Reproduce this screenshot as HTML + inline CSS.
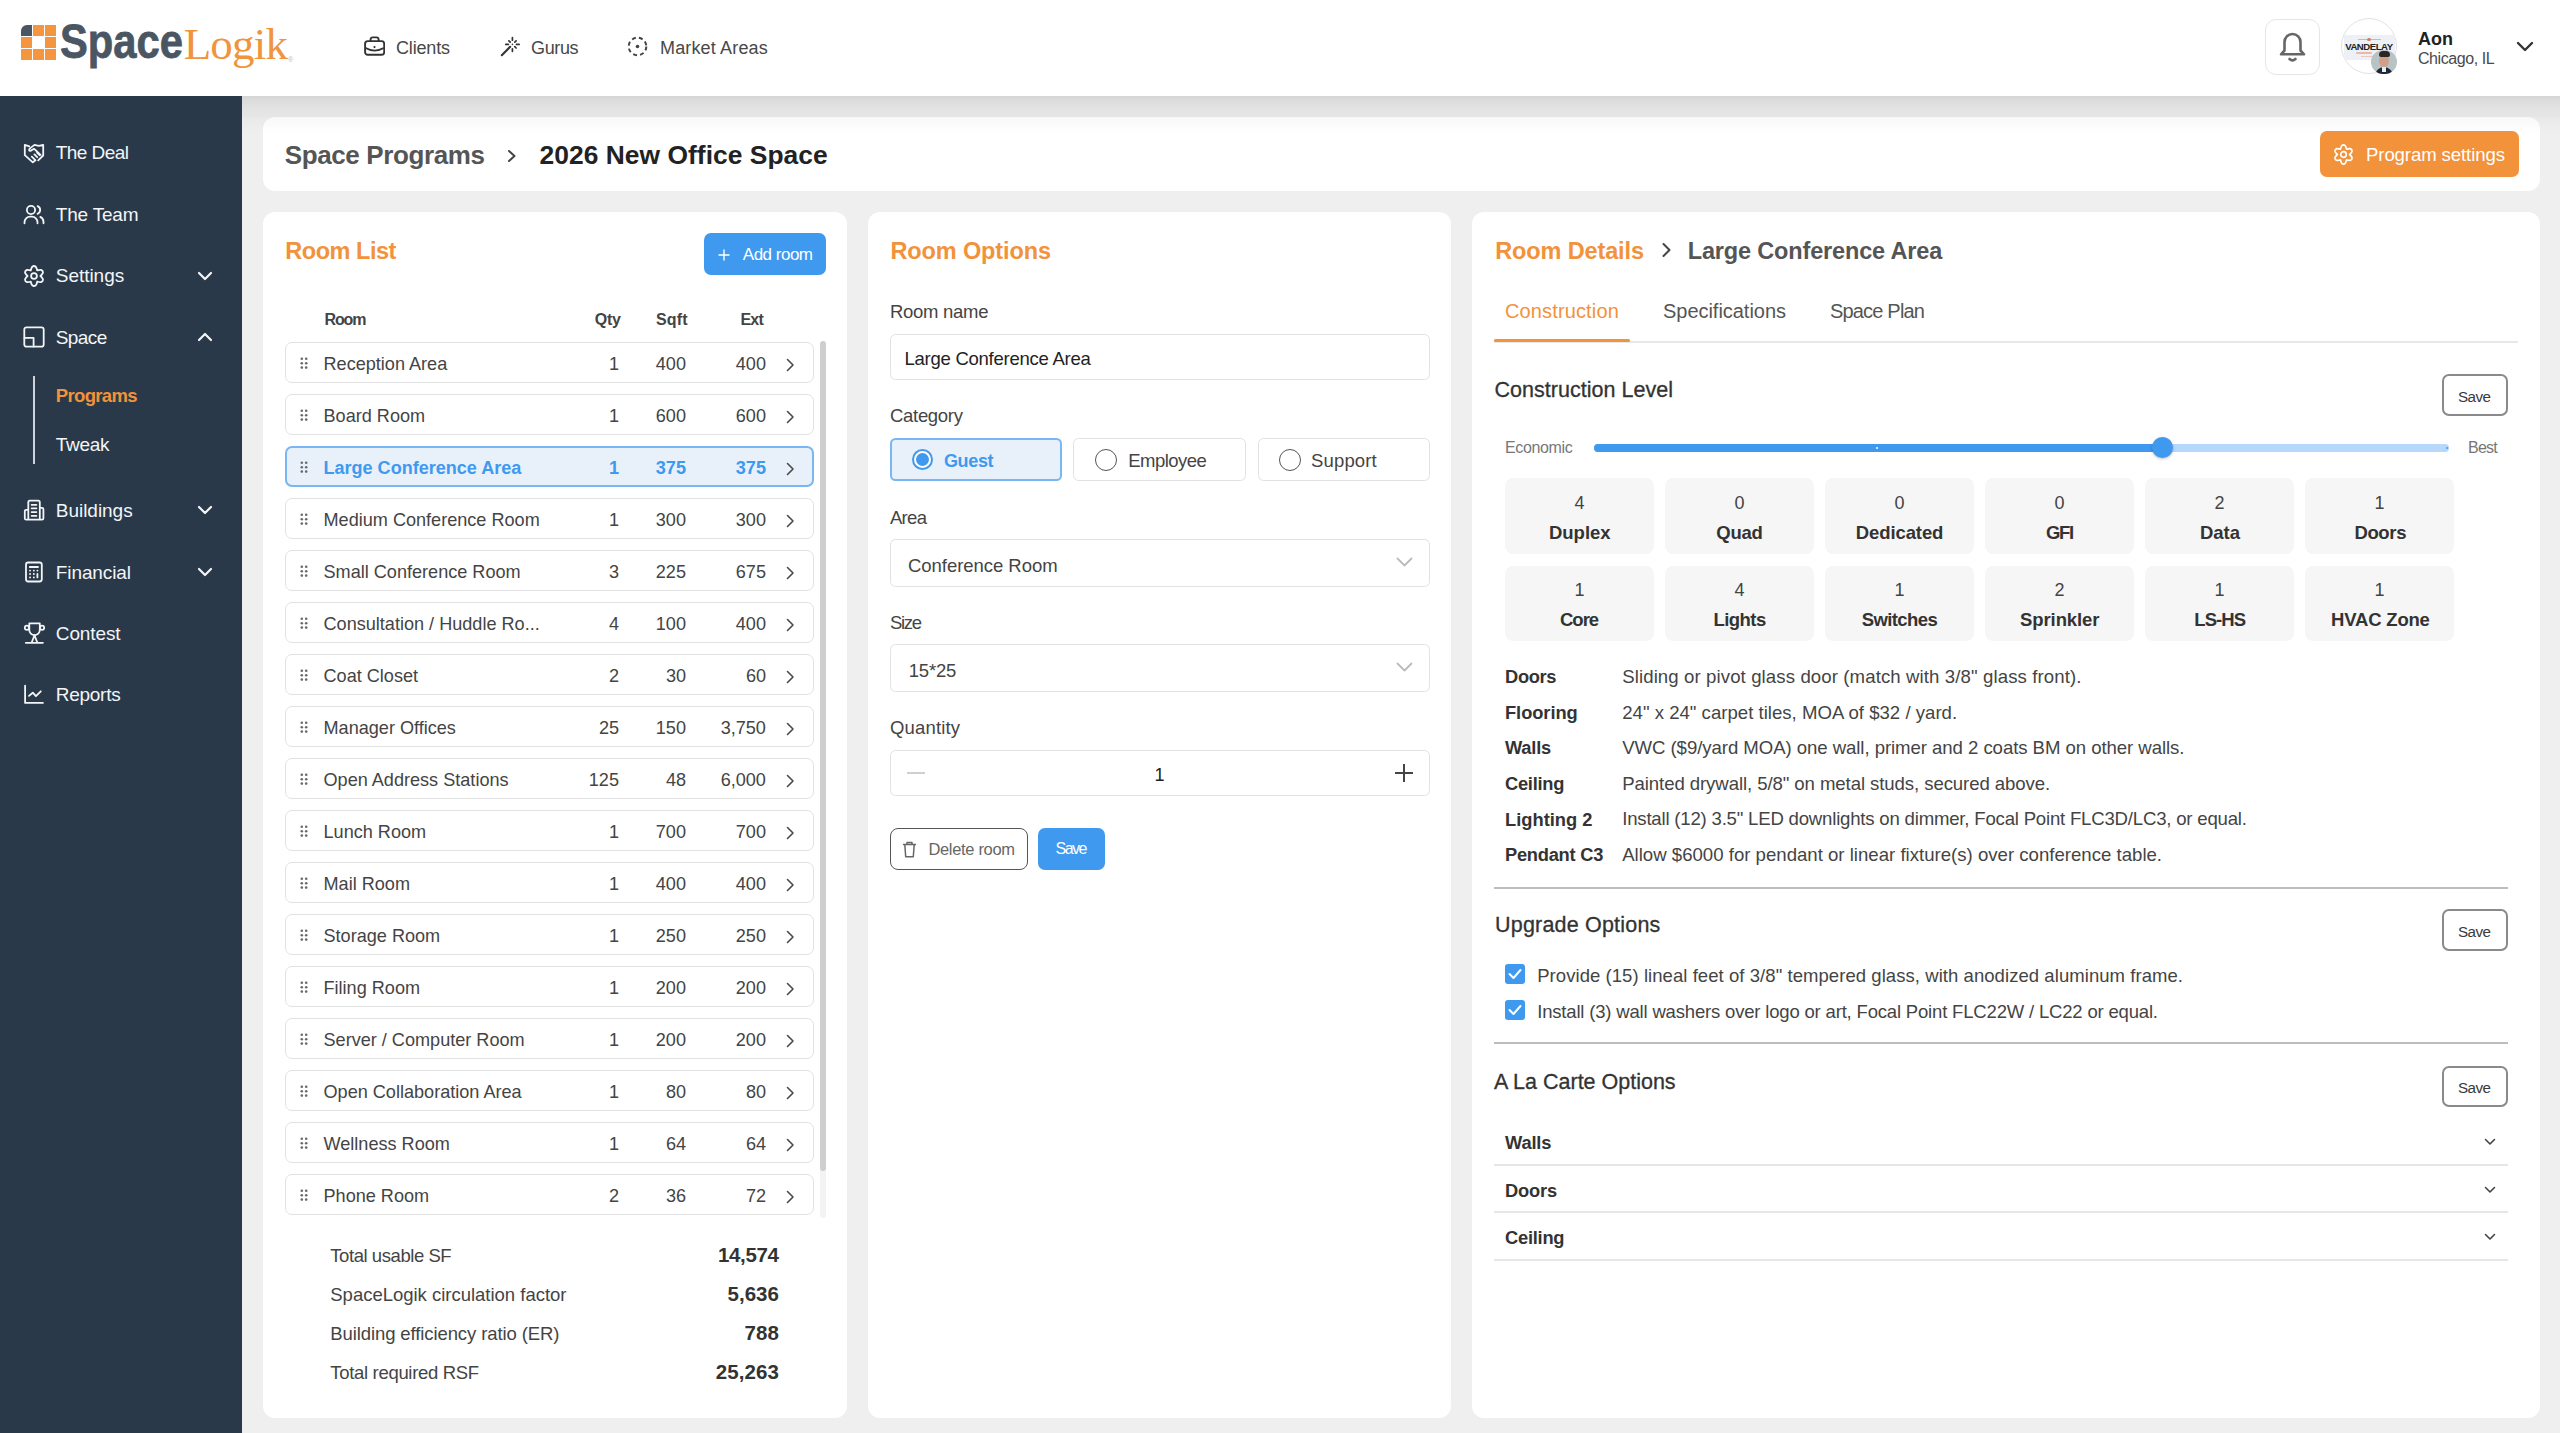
<!DOCTYPE html><html><head><meta charset="utf-8"><style>
html,body{margin:0;padding:0;}
body{width:2560px;height:1433px;overflow:hidden;position:relative;background:#efefef;font-family:"Liberation Sans", sans-serif;}
.t{position:absolute;white-space:nowrap;}
.r{position:absolute;box-sizing:border-box;}
</style></head><body>
<div class="r" style="left:0px;top:0px;width:2560px;height:96px;background:#fff;z-index:2"></div>
<div style="position:absolute;left:0;top:0;width:2560px;height:96px;z-index:3">
<div class="r" style="left:21.0px;top:25.0px;width:11.0px;height:11.0px;background:#4b5663;border-top-left-radius:6px;"></div>
<div class="r" style="left:33.2px;top:25.0px;width:11.0px;height:11.0px;background:#f3963f;"></div>
<div class="r" style="left:45.4px;top:25.0px;width:11.0px;height:11.0px;background:#f3963f;"></div>
<div class="r" style="left:21.0px;top:37.2px;width:11.0px;height:11.0px;background:#f3963f;"></div>
<div class="r" style="left:45.4px;top:37.2px;width:11.0px;height:11.0px;background:#f3963f;"></div>
<div class="r" style="left:21.0px;top:49.4px;width:11.0px;height:11.0px;background:#f3963f;"></div>
<div class="r" style="left:33.2px;top:49.4px;width:11.0px;height:11.0px;background:#f3963f;"></div>
<div class="r" style="left:45.4px;top:49.4px;width:11.0px;height:11.0px;background:#f3963f;"></div>
<div class="t" style="top:16.94px;font-size:48.5px;line-height:48.5px;font-weight:700;color:#4b5663;left:59.70px;transform:scaleX(0.86);transform-origin:0 0;-webkit-text-stroke:0.8px #4b5663;">Space</div>
<div class="t" style="top:21.60px;font-size:45px;line-height:45px;font-weight:400;color:#f0943e;font-family:'Liberation Serif', serif;letter-spacing:-0.812px;left:183.70px;">Logik</div>
<div class="t" style="top:56.07px;font-size:7px;line-height:7px;font-weight:400;color:#bbb;left:288.00px;">®</div>
<svg class="r" style="left:364px;top:36px;" width="21" height="20" viewBox="0 0 21 20"><rect x="1.1" y="5.1" width="19.1" height="13.7" rx="2.6" fill="none" stroke="#333" stroke-width="1.9"/><path d="M6.6 5.1V3.3a1.9 1.9 0 0 1 1.9-1.9h4.2a1.9 1.9 0 0 1 1.9 1.9V5.1" fill="none" stroke="#333" stroke-width="1.9"/><path d="M1.6 12Q10.6 17.2 19.7 12" fill="none" stroke="#333" stroke-width="1.9"/><circle cx="10.5" cy="11.1" r="1.1" fill="#333"/></svg>
<div class="t" style="top:38.76px;font-size:18px;line-height:18px;font-weight:400;color:#484848;letter-spacing:-0.165px;left:396.00px;">Clients</div>
<svg class="r" style="left:500px;top:36px;" width="21" height="21" viewBox="0 0 21 21"><path d="M1.8 19.2L10.2 10.8" stroke="#333" stroke-width="2.1" stroke-linecap="round"/><path d="M12.4 1.7v2.5M12.4 12.8v2.5M5.8 8.4h2.6M16.5 8.4h2.6M8.9 4.8l1.3 1.3M16.1 4.8l-1.3 1.3M16.1 12l-1.3-1.3" stroke="#333" stroke-width="1.7" stroke-linecap="round"/><circle cx="12.4" cy="8.4" r="0.8" fill="#333"/></svg>
<div class="t" style="top:38.76px;font-size:18px;line-height:18px;font-weight:400;color:#484848;letter-spacing:-0.362px;left:531.00px;">Gurus</div>
<svg class="r" style="left:627px;top:36px;" width="21" height="21" viewBox="0 0 21 21"><circle cx="10.5" cy="10.5" r="8.8" fill="none" stroke="#444" stroke-width="2" stroke-dasharray="4 3.1"/><circle cx="10.5" cy="10.5" r="1.8" fill="#444"/></svg>
<div class="t" style="top:38.76px;font-size:18px;line-height:18px;font-weight:400;color:#484848;letter-spacing:0.153px;left:660.00px;">Market Areas</div>
<div class="r" style="left:2265px;top:19px;width:55px;height:56px;border:1.5px solid #e6e6e6;border-radius:11px;background:#fff"></div>
<svg class="r" style="left:2278px;top:30px;" width="29" height="34" viewBox="0 0 29 34"><path d="M6.5 20.5V12a8 8 0 0 1 16 0v8.5l3.5 3.8H3z" fill="none" stroke="#666" stroke-width="2.6" stroke-linejoin="round"/><path d="M11.5 29q3 2.6 6 0" fill="none" stroke="#666" stroke-width="2.6" stroke-linecap="round"/></svg>
<div class="r" style="left:2341px;top:18px;width:56px;height:56px;border:1.5px solid #e2e2e2;border-radius:50%;background:#fff"></div>
<div class="r" style="left:2344px;top:34.5px;width:51px;height:25.0px;background:#edf0f5"></div>
<div class="r" style="left:2357.5px;top:38.8px;width:23.5px;height:1.0px;background:#e6aea2"></div>
<div class="r" style="left:2367px;top:37.5px;width:4px;height:3.5px;background:#d07a68;border-radius:50%"></div>
<div class="r" style="left:2356px;top:52px;width:16px;height:1.5px;background:#e8b8ac;border-radius:1px"></div>
<div class="r" style="left:2361px;top:56px;width:16px;height:1px;background:#eec5bb"></div>
<div class="t" style="top:41.87px;font-size:9.6px;line-height:9.6px;font-weight:900;color:#222;letter-spacing:-0.474px;left:2345.20px;">VANDELAY</div>
<div class="r" style="left:2371px;top:49.5px;width:25.5px;height:24.5px;border-radius:50%;overflow:hidden;background:#b7c3c4;"><div class="r" style="left:8px;top:5px;width:10px;height:12.5px;border-radius:48%;background:#d0a088"></div><div class="r" style="left:7.5px;top:1.5px;width:11px;height:6px;border-radius:6px 6px 3px 3px;background:#2e2622"></div><div class="r" style="left:3.5px;top:17.5px;width:18.5px;height:10px;border-radius:9px 9px 0 0;background:#1d2536"></div><div class="r" style="left:11px;top:17px;width:4px;height:5px;background:#e8eef0"></div></div>
<div class="t" style="top:29.76px;font-size:18px;line-height:18px;font-weight:700;color:#222;letter-spacing:-0.005px;left:2418.00px;">Aon</div>
<div class="t" style="top:51.45px;font-size:16px;line-height:16px;font-weight:400;color:#4a4a4a;letter-spacing:-0.436px;left:2418.00px;">Chicago, IL</div>
<svg class="r" style="left:2516px;top:41px;" width="18" height="12" viewBox="0 0 18 12"><path d="M2 2l7 7 7-7" fill="none" stroke="#333" stroke-width="2.4" stroke-linecap="round" stroke-linejoin="round"/></svg>
</div>
<div class="r" style="left:0px;top:96px;width:242px;height:1337px;background:#293949"></div>
<div class="t" style="top:143.41px;font-size:19px;line-height:19px;font-weight:400;color:#f4f5f7;letter-spacing:-0.563px;left:55.80px;">The Deal</div>
<div class="t" style="top:204.91px;font-size:19px;line-height:19px;font-weight:400;color:#f4f5f7;letter-spacing:-0.210px;left:55.80px;">The Team</div>
<div class="t" style="top:266.41px;font-size:19px;line-height:19px;font-weight:400;color:#f4f5f7;letter-spacing:-0.041px;left:55.80px;">Settings</div>
<div class="t" style="top:327.71px;font-size:19px;line-height:19px;font-weight:400;color:#f4f5f7;letter-spacing:-0.616px;left:55.80px;">Space</div>
<div class="t" style="top:501.11px;font-size:19px;line-height:19px;font-weight:400;color:#f4f5f7;letter-spacing:-0.030px;left:55.80px;">Buildings</div>
<div class="t" style="top:562.71px;font-size:19px;line-height:19px;font-weight:400;color:#f4f5f7;letter-spacing:-0.100px;left:55.80px;">Financial</div>
<div class="t" style="top:623.91px;font-size:19px;line-height:19px;font-weight:400;color:#f4f5f7;letter-spacing:-0.109px;left:55.80px;">Contest</div>
<div class="t" style="top:685.21px;font-size:19px;line-height:19px;font-weight:400;color:#f4f5f7;letter-spacing:-0.283px;left:55.80px;">Reports</div>
<svg class="r" style="left:23px;top:141.5px;" width="22" height="22" viewBox="0 0 22 22"><path d="M1.8 2.8V13.2L9.8 20.3L12.5 18.3M20.2 2.8V13.5L15.2 18.3M1.8 2.8L6.3 4.3M20.2 2.8L15.8 3.9L11.5 2.9L6.6 6.6Q5.2 8.9 7.4 8.9L11.2 6.8L17.6 12.8M8.8 14.6L11.6 17.4M11.4 12.4L14.2 15.2M14 10.6L16.6 13.2" fill="none" stroke="#f4f5f7" stroke-width="1.8" stroke-linecap="round" stroke-linejoin="round"/></svg>
<svg class="r" style="left:23px;top:203px;" width="22" height="22" viewBox="0 0 22 22"><circle cx="8" cy="7" r="4.1" fill="none" stroke="#f4f5f7" stroke-width="1.8" stroke-linecap="round" stroke-linejoin="round"/><path d="M1.5 20.3v-1a5.6 5.6 0 0 1 5.6-5.6h1.8a5.6 5.6 0 0 1 5.6 5.6v1" fill="none" stroke="#f4f5f7" stroke-width="1.8" stroke-linecap="round" stroke-linejoin="round"/><path d="M14.6 3.2a4.1 4.1 0 0 1 0 7.6M17.3 13.9a5.6 5.6 0 0 1 3.2 5.2v1.2" fill="none" stroke="#f4f5f7" stroke-width="1.8" stroke-linecap="round" stroke-linejoin="round"/></svg>
<svg class="r" style="left:23px;top:264.5px;" width="22" height="22" viewBox="0 0 22 22"><path d="M7.80 5.46 Q8.00 3.58 9.21 1.77 Q11.00 0.30 12.79 1.77 Q14.00 3.58 14.20 5.46 Q15.93 4.70 18.09 4.83 Q20.27 5.65 19.89 7.94 Q18.92 9.89 17.40 11.00 Q18.92 12.11 19.89 14.06 Q20.27 16.35 18.09 17.17 Q15.93 17.30 14.20 16.54 Q14.00 18.42 12.79 20.23 Q11.00 21.70 9.21 20.23 Q8.00 18.42 7.80 16.54 Q6.07 17.30 3.91 17.17 Q1.73 16.35 2.11 14.06 Q3.08 12.11 4.60 11.00 Q3.08 9.89 2.11 7.94 Q1.73 5.65 3.91 4.83 Q6.07 4.70 7.80 5.46Z" fill="none" stroke="#f4f5f7" stroke-width="1.8" stroke-linecap="round" stroke-linejoin="round"/><circle cx="11" cy="11" r="2.9" fill="none" stroke="#f4f5f7" stroke-width="1.8" stroke-linecap="round" stroke-linejoin="round"/></svg>
<svg class="r" style="left:23px;top:325.8px;" width="22" height="22" viewBox="0 0 22 22"><rect x="1.3" y="1.3" width="19.4" height="19.4" rx="2.2" fill="none" stroke="#f4f5f7" stroke-width="1.8" stroke-linecap="round" stroke-linejoin="round"/><path d="M1.5 11.9h9.1v8.6" fill="none" stroke="#f4f5f7" stroke-width="1.8" stroke-linecap="round" stroke-linejoin="round"/></svg>
<svg class="r" style="left:23px;top:499.2px;" width="22" height="22" viewBox="0 0 22 22"><path d="M5.3 20.6V3.3a1.6 1.6 0 0 1 1.6-1.6h8.3a1.6 1.6 0 0 1 1.6 1.6v17.3M5.3 10.8H3.2a1.4 1.4 0 0 0-1.4 1.4v7a1.4 1.4 0 0 0 1.4 1.4h15.8a1.4 1.4 0 0 0 1.4-1.4v-8.9a1.4 1.4 0 0 0-1.4-1.4h-2.2M8.6 5.8h4.8M8.6 9.3h4.8M8.6 13.1h4.8M8.6 16.8h4.8" fill="none" stroke="#f4f5f7" stroke-width="1.8" stroke-linecap="round" stroke-linejoin="round"/></svg>
<svg class="r" style="left:23px;top:560.8px;" width="22" height="22" viewBox="0 0 22 22"><rect x="3" y="1.5" width="15.8" height="19" rx="2.2" fill="none" stroke="#f4f5f7" stroke-width="1.8" stroke-linecap="round" stroke-linejoin="round"/><path d="M6.8 6h8.2M7 9.6h.1M10.8 9.6h.1M14.4 9.6h.1M7 13h.1M10.8 13h.1M7 16.4h.1M10.8 16.4h.1M14.4 13v3.4" fill="none" stroke="#f4f5f7" stroke-width="1.8" stroke-linecap="round" stroke-linejoin="round" stroke-width="2"/></svg>
<svg class="r" style="left:23px;top:622px;" width="22" height="22" viewBox="0 0 22 22"><path d="M6.3 1.4h10.5v6.5a5.25 5.25 0 0 1-10.5 0z" fill="none" stroke="#f4f5f7" stroke-width="1.8" stroke-linecap="round" stroke-linejoin="round"/><circle cx="3.9" cy="5.7" r="2.1" fill="none" stroke="#f4f5f7" stroke-width="1.8" stroke-linecap="round" stroke-linejoin="round"/><circle cx="19.1" cy="5.7" r="2.1" fill="none" stroke="#f4f5f7" stroke-width="1.8" stroke-linecap="round" stroke-linejoin="round"/><path d="M11.5 13.2L8.6 20.8h5.8z M2.8 20.8h17.1" fill="none" stroke="#f4f5f7" stroke-width="1.8" stroke-linecap="round" stroke-linejoin="round"/></svg>
<svg class="r" style="left:23px;top:683.3px;" width="22" height="22" viewBox="0 0 22 22"><path d="M2.1 2.7V19.9H19.9" fill="none" stroke="#f4f5f7" stroke-width="1.8" stroke-linecap="round" stroke-linejoin="round"/><path d="M6 12.9L9.8 9.7L12.9 13.2L17.8 8.3" fill="none" stroke="#f4f5f7" stroke-width="1.8" stroke-linecap="round" stroke-linejoin="round"/></svg>
<svg class="r" style="left:197px;top:270.5px;" width="16" height="10" viewBox="0 0 16 10"><path d="M2 2l6 6 6-6" fill="none" stroke="#f4f5f7" stroke-width="2.2" stroke-linecap="round" stroke-linejoin="round"/></svg>
<svg class="r" style="left:197px;top:331.8px;" width="16" height="10" viewBox="0 0 16 10"><path d="M2 8l6-6 6 6" fill="none" stroke="#f4f5f7" stroke-width="2.2" stroke-linecap="round" stroke-linejoin="round"/></svg>
<svg class="r" style="left:197px;top:505.2px;" width="16" height="10" viewBox="0 0 16 10"><path d="M2 2l6 6 6-6" fill="none" stroke="#f4f5f7" stroke-width="2.2" stroke-linecap="round" stroke-linejoin="round"/></svg>
<svg class="r" style="left:197px;top:566.8px;" width="16" height="10" viewBox="0 0 16 10"><path d="M2 2l6 6 6-6" fill="none" stroke="#f4f5f7" stroke-width="2.2" stroke-linecap="round" stroke-linejoin="round"/></svg>
<div class="r" style="left:32.5px;top:376px;width:2.0px;height:88px;background:#d0d4da"></div>
<div class="t" style="top:386.84px;font-size:18.5px;line-height:18.5px;font-weight:700;color:#f2923b;letter-spacing:-0.656px;left:55.80px;">Programs</div>
<div class="t" style="top:434.91px;font-size:19px;line-height:19px;font-weight:400;color:#f4f5f7;letter-spacing:-0.326px;left:55.80px;">Tweak</div>
<div class="r" style="left:263px;top:117px;width:2277px;height:74px;background:#fff;border-radius:12px"></div>
<div class="t" style="top:141.99px;font-size:26px;line-height:26px;font-weight:700;color:#555;letter-spacing:-0.382px;left:284.70px;">Space Programs</div>
<svg class="r" style="left:507px;top:149px;" width="10" height="14" viewBox="0 0 10 14"><path d="M2 2l5.5 5-5.5 5" fill="none" stroke="#444" stroke-width="2" stroke-linecap="round" stroke-linejoin="round"/></svg>
<div class="t" style="top:141.85px;font-size:26.4px;line-height:26.4px;font-weight:700;color:#222;letter-spacing:0.029px;left:539.60px;">2026 New Office Space</div>
<div class="r" style="left:2320px;top:131px;width:199px;height:46px;background:#f2923b;border-radius:7px"></div>
<svg class="r" style="left:2333px;top:144px;" width="21" height="21" viewBox="0 0 21 21"><path d="M7.45 5.22 Q7.64 3.42 8.78 1.67 Q10.50 0.26 12.22 1.67 Q13.36 3.42 13.55 5.22 Q15.20 4.49 17.29 4.60 Q19.37 5.38 19.01 7.57 Q18.06 9.44 16.60 10.50 Q18.06 11.56 19.01 13.43 Q19.37 15.62 17.29 16.40 Q15.20 16.51 13.55 15.78 Q13.36 17.58 12.22 19.33 Q10.50 20.74 8.78 19.33 Q7.64 17.58 7.45 15.78 Q5.80 16.51 3.71 16.40 Q1.63 15.62 1.99 13.43 Q2.94 11.56 4.40 10.50 Q2.94 9.44 1.99 7.57 Q1.63 5.38 3.71 4.60 Q5.80 4.49 7.45 5.22Z" fill="none" stroke="#fff" stroke-width="1.7" stroke-linejoin="round"/><circle cx="10.5" cy="10.5" r="2.8" fill="none" stroke="#fff" stroke-width="1.7"/></svg>
<div class="t" style="top:145.75px;font-size:18.6px;line-height:18.6px;font-weight:400;color:#fff;letter-spacing:-0.108px;left:2366.00px;">Program settings</div>
<div class="r" style="left:263px;top:212px;width:584px;height:1206px;background:#fff;border-radius:12px"></div>
<div class="r" style="left:868px;top:212px;width:583px;height:1206px;background:#fff;border-radius:12px"></div>
<div class="r" style="left:1472px;top:212px;width:1068px;height:1206px;background:#fff;border-radius:12px"></div>
<div class="t" style="top:240.10px;font-size:23.5px;line-height:23.5px;font-weight:700;color:#f2923b;letter-spacing:-0.477px;left:285.30px;">Room List</div>
<div class="r" style="left:704px;top:233px;width:122px;height:42px;background:#3e99ef;border-radius:7px"></div>
<svg class="r" style="left:717.5px;top:248.5px;" width="12" height="12" viewBox="0 0 12 12"><path d="M6 .5v11M.5 6h11" stroke="#fff" stroke-width="1.4"/></svg>
<div class="t" style="top:246.11px;font-size:17px;line-height:17px;font-weight:400;color:#fff;letter-spacing:-0.499px;left:742.80px;">Add room</div>
<div class="t" style="top:312.25px;font-size:16px;line-height:16px;font-weight:700;color:#444;letter-spacing:-1.053px;left:324.40px;">Room</div>
<div class="t" style="top:312.25px;font-size:16px;line-height:16px;font-weight:700;color:#444;letter-spacing:-0.170px;left:594.70px;">Qty</div>
<div class="t" style="top:312.25px;font-size:16px;line-height:16px;font-weight:700;color:#444;letter-spacing:0.193px;left:656.00px;">Sqft</div>
<div class="t" style="top:312.25px;font-size:16px;line-height:16px;font-weight:700;color:#444;letter-spacing:-0.690px;left:740.40px;">Ext</div>
<div class="r" style="left:285px;top:342px;width:529px;height:41px;background:#fff;border:1.5px solid #e2e2e2;border-radius:7px"></div>
<svg class="r" style="left:300px;top:356.5px;" width="8" height="13" viewBox="0 0 8 13"><circle cx="1.8" cy="1.8" r="1.3" fill="#6a6a6a"/><circle cx="1.8" cy="6.2" r="1.3" fill="#6a6a6a"/><circle cx="1.8" cy="10.6" r="1.3" fill="#6a6a6a"/><circle cx="6.2" cy="1.8" r="1.3" fill="#6a6a6a"/><circle cx="6.2" cy="6.2" r="1.3" fill="#6a6a6a"/><circle cx="6.2" cy="10.6" r="1.3" fill="#6a6a6a"/></svg>
<div class="t" style="top:354.67px;font-size:18.1px;line-height:18.1px;font-weight:400;color:#444;left:323.50px;">Reception Area</div>
<div class="t" style="top:354.67px;font-size:18.1px;line-height:18.1px;font-weight:400;color:#444;left:608.95px;">1</div>
<div class="t" style="top:354.67px;font-size:18.1px;line-height:18.1px;font-weight:400;color:#444;left:655.77px;">400</div>
<div class="t" style="top:354.67px;font-size:18.1px;line-height:18.1px;font-weight:400;color:#444;left:735.77px;">400</div>
<svg class="r" style="left:785.5px;top:358px;" width="9" height="14" viewBox="0 0 9 14"><path d="M1.5 1.5l5.5 5.5-5.5 5.5" fill="none" stroke="#4a4a4a" stroke-width="1.6" stroke-linecap="round" stroke-linejoin="round"/></svg>
<div class="r" style="left:285px;top:394px;width:529px;height:41px;background:#fff;border:1.5px solid #e2e2e2;border-radius:7px"></div>
<svg class="r" style="left:300px;top:408.5px;" width="8" height="13" viewBox="0 0 8 13"><circle cx="1.8" cy="1.8" r="1.3" fill="#6a6a6a"/><circle cx="1.8" cy="6.2" r="1.3" fill="#6a6a6a"/><circle cx="1.8" cy="10.6" r="1.3" fill="#6a6a6a"/><circle cx="6.2" cy="1.8" r="1.3" fill="#6a6a6a"/><circle cx="6.2" cy="6.2" r="1.3" fill="#6a6a6a"/><circle cx="6.2" cy="10.6" r="1.3" fill="#6a6a6a"/></svg>
<div class="t" style="top:406.67px;font-size:18.1px;line-height:18.1px;font-weight:400;color:#444;left:323.50px;">Board Room</div>
<div class="t" style="top:406.67px;font-size:18.1px;line-height:18.1px;font-weight:400;color:#444;left:608.95px;">1</div>
<div class="t" style="top:406.67px;font-size:18.1px;line-height:18.1px;font-weight:400;color:#444;left:655.77px;">600</div>
<div class="t" style="top:406.67px;font-size:18.1px;line-height:18.1px;font-weight:400;color:#444;left:735.77px;">600</div>
<svg class="r" style="left:785.5px;top:410px;" width="9" height="14" viewBox="0 0 9 14"><path d="M1.5 1.5l5.5 5.5-5.5 5.5" fill="none" stroke="#4a4a4a" stroke-width="1.6" stroke-linecap="round" stroke-linejoin="round"/></svg>
<div class="r" style="left:285px;top:446px;width:529px;height:41px;background:#e8f0fa;border:2px solid #78b6f4;border-radius:7px"></div>
<svg class="r" style="left:300px;top:460.5px;" width="8" height="13" viewBox="0 0 8 13"><circle cx="1.8" cy="1.8" r="1.3" fill="#6a6a6a"/><circle cx="1.8" cy="6.2" r="1.3" fill="#6a6a6a"/><circle cx="1.8" cy="10.6" r="1.3" fill="#6a6a6a"/><circle cx="6.2" cy="1.8" r="1.3" fill="#6a6a6a"/><circle cx="6.2" cy="6.2" r="1.3" fill="#6a6a6a"/><circle cx="6.2" cy="10.6" r="1.3" fill="#6a6a6a"/></svg>
<div class="t" style="top:458.72px;font-size:18.05px;line-height:18.05px;font-weight:700;color:#3e99ef;left:323.50px;">Large Conference Area</div>
<div class="t" style="top:458.67px;font-size:18.1px;line-height:18.1px;font-weight:700;color:#3e99ef;left:608.95px;">1</div>
<div class="t" style="top:458.67px;font-size:18.1px;line-height:18.1px;font-weight:700;color:#3e99ef;left:655.77px;">375</div>
<div class="t" style="top:458.67px;font-size:18.1px;line-height:18.1px;font-weight:700;color:#3e99ef;left:735.77px;">375</div>
<svg class="r" style="left:785.5px;top:462px;" width="9" height="14" viewBox="0 0 9 14"><path d="M1.5 1.5l5.5 5.5-5.5 5.5" fill="none" stroke="#4a4a4a" stroke-width="1.6" stroke-linecap="round" stroke-linejoin="round"/></svg>
<div class="r" style="left:285px;top:498px;width:529px;height:41px;background:#fff;border:1.5px solid #e2e2e2;border-radius:7px"></div>
<svg class="r" style="left:300px;top:512.5px;" width="8" height="13" viewBox="0 0 8 13"><circle cx="1.8" cy="1.8" r="1.3" fill="#6a6a6a"/><circle cx="1.8" cy="6.2" r="1.3" fill="#6a6a6a"/><circle cx="1.8" cy="10.6" r="1.3" fill="#6a6a6a"/><circle cx="6.2" cy="1.8" r="1.3" fill="#6a6a6a"/><circle cx="6.2" cy="6.2" r="1.3" fill="#6a6a6a"/><circle cx="6.2" cy="10.6" r="1.3" fill="#6a6a6a"/></svg>
<div class="t" style="top:510.67px;font-size:18.1px;line-height:18.1px;font-weight:400;color:#444;left:323.50px;">Medium Conference Room</div>
<div class="t" style="top:510.67px;font-size:18.1px;line-height:18.1px;font-weight:400;color:#444;left:608.95px;">1</div>
<div class="t" style="top:510.67px;font-size:18.1px;line-height:18.1px;font-weight:400;color:#444;left:655.77px;">300</div>
<div class="t" style="top:510.67px;font-size:18.1px;line-height:18.1px;font-weight:400;color:#444;left:735.77px;">300</div>
<svg class="r" style="left:785.5px;top:514px;" width="9" height="14" viewBox="0 0 9 14"><path d="M1.5 1.5l5.5 5.5-5.5 5.5" fill="none" stroke="#4a4a4a" stroke-width="1.6" stroke-linecap="round" stroke-linejoin="round"/></svg>
<div class="r" style="left:285px;top:550px;width:529px;height:41px;background:#fff;border:1.5px solid #e2e2e2;border-radius:7px"></div>
<svg class="r" style="left:300px;top:564.5px;" width="8" height="13" viewBox="0 0 8 13"><circle cx="1.8" cy="1.8" r="1.3" fill="#6a6a6a"/><circle cx="1.8" cy="6.2" r="1.3" fill="#6a6a6a"/><circle cx="1.8" cy="10.6" r="1.3" fill="#6a6a6a"/><circle cx="6.2" cy="1.8" r="1.3" fill="#6a6a6a"/><circle cx="6.2" cy="6.2" r="1.3" fill="#6a6a6a"/><circle cx="6.2" cy="10.6" r="1.3" fill="#6a6a6a"/></svg>
<div class="t" style="top:562.67px;font-size:18.1px;line-height:18.1px;font-weight:400;color:#444;left:323.50px;">Small Conference Room</div>
<div class="t" style="top:562.67px;font-size:18.1px;line-height:18.1px;font-weight:400;color:#444;left:608.95px;">3</div>
<div class="t" style="top:562.67px;font-size:18.1px;line-height:18.1px;font-weight:400;color:#444;left:655.77px;">225</div>
<div class="t" style="top:562.67px;font-size:18.1px;line-height:18.1px;font-weight:400;color:#444;left:735.77px;">675</div>
<svg class="r" style="left:785.5px;top:566px;" width="9" height="14" viewBox="0 0 9 14"><path d="M1.5 1.5l5.5 5.5-5.5 5.5" fill="none" stroke="#4a4a4a" stroke-width="1.6" stroke-linecap="round" stroke-linejoin="round"/></svg>
<div class="r" style="left:285px;top:602px;width:529px;height:41px;background:#fff;border:1.5px solid #e2e2e2;border-radius:7px"></div>
<svg class="r" style="left:300px;top:616.5px;" width="8" height="13" viewBox="0 0 8 13"><circle cx="1.8" cy="1.8" r="1.3" fill="#6a6a6a"/><circle cx="1.8" cy="6.2" r="1.3" fill="#6a6a6a"/><circle cx="1.8" cy="10.6" r="1.3" fill="#6a6a6a"/><circle cx="6.2" cy="1.8" r="1.3" fill="#6a6a6a"/><circle cx="6.2" cy="6.2" r="1.3" fill="#6a6a6a"/><circle cx="6.2" cy="10.6" r="1.3" fill="#6a6a6a"/></svg>
<div class="t" style="top:614.67px;font-size:18.1px;line-height:18.1px;font-weight:400;color:#444;left:323.50px;">Consultation / Huddle Ro...</div>
<div class="t" style="top:614.67px;font-size:18.1px;line-height:18.1px;font-weight:400;color:#444;left:608.95px;">4</div>
<div class="t" style="top:614.67px;font-size:18.1px;line-height:18.1px;font-weight:400;color:#444;left:655.77px;">100</div>
<div class="t" style="top:614.67px;font-size:18.1px;line-height:18.1px;font-weight:400;color:#444;left:735.77px;">400</div>
<svg class="r" style="left:785.5px;top:618px;" width="9" height="14" viewBox="0 0 9 14"><path d="M1.5 1.5l5.5 5.5-5.5 5.5" fill="none" stroke="#4a4a4a" stroke-width="1.6" stroke-linecap="round" stroke-linejoin="round"/></svg>
<div class="r" style="left:285px;top:654px;width:529px;height:41px;background:#fff;border:1.5px solid #e2e2e2;border-radius:7px"></div>
<svg class="r" style="left:300px;top:668.5px;" width="8" height="13" viewBox="0 0 8 13"><circle cx="1.8" cy="1.8" r="1.3" fill="#6a6a6a"/><circle cx="1.8" cy="6.2" r="1.3" fill="#6a6a6a"/><circle cx="1.8" cy="10.6" r="1.3" fill="#6a6a6a"/><circle cx="6.2" cy="1.8" r="1.3" fill="#6a6a6a"/><circle cx="6.2" cy="6.2" r="1.3" fill="#6a6a6a"/><circle cx="6.2" cy="10.6" r="1.3" fill="#6a6a6a"/></svg>
<div class="t" style="top:666.67px;font-size:18.1px;line-height:18.1px;font-weight:400;color:#444;left:323.50px;">Coat Closet</div>
<div class="t" style="top:666.67px;font-size:18.1px;line-height:18.1px;font-weight:400;color:#444;left:608.95px;">2</div>
<div class="t" style="top:666.67px;font-size:18.1px;line-height:18.1px;font-weight:400;color:#444;left:665.91px;">30</div>
<div class="t" style="top:666.67px;font-size:18.1px;line-height:18.1px;font-weight:400;color:#444;left:745.91px;">60</div>
<svg class="r" style="left:785.5px;top:670px;" width="9" height="14" viewBox="0 0 9 14"><path d="M1.5 1.5l5.5 5.5-5.5 5.5" fill="none" stroke="#4a4a4a" stroke-width="1.6" stroke-linecap="round" stroke-linejoin="round"/></svg>
<div class="r" style="left:285px;top:706px;width:529px;height:41px;background:#fff;border:1.5px solid #e2e2e2;border-radius:7px"></div>
<svg class="r" style="left:300px;top:720.5px;" width="8" height="13" viewBox="0 0 8 13"><circle cx="1.8" cy="1.8" r="1.3" fill="#6a6a6a"/><circle cx="1.8" cy="6.2" r="1.3" fill="#6a6a6a"/><circle cx="1.8" cy="10.6" r="1.3" fill="#6a6a6a"/><circle cx="6.2" cy="1.8" r="1.3" fill="#6a6a6a"/><circle cx="6.2" cy="6.2" r="1.3" fill="#6a6a6a"/><circle cx="6.2" cy="10.6" r="1.3" fill="#6a6a6a"/></svg>
<div class="t" style="top:718.67px;font-size:18.1px;line-height:18.1px;font-weight:400;color:#444;left:323.50px;">Manager Offices</div>
<div class="t" style="top:718.67px;font-size:18.1px;line-height:18.1px;font-weight:400;color:#444;left:598.91px;">25</div>
<div class="t" style="top:718.67px;font-size:18.1px;line-height:18.1px;font-weight:400;color:#444;left:655.77px;">150</div>
<div class="t" style="top:718.67px;font-size:18.1px;line-height:18.1px;font-weight:400;color:#444;left:720.66px;">3,750</div>
<svg class="r" style="left:785.5px;top:722px;" width="9" height="14" viewBox="0 0 9 14"><path d="M1.5 1.5l5.5 5.5-5.5 5.5" fill="none" stroke="#4a4a4a" stroke-width="1.6" stroke-linecap="round" stroke-linejoin="round"/></svg>
<div class="r" style="left:285px;top:758px;width:529px;height:41px;background:#fff;border:1.5px solid #e2e2e2;border-radius:7px"></div>
<svg class="r" style="left:300px;top:772.5px;" width="8" height="13" viewBox="0 0 8 13"><circle cx="1.8" cy="1.8" r="1.3" fill="#6a6a6a"/><circle cx="1.8" cy="6.2" r="1.3" fill="#6a6a6a"/><circle cx="1.8" cy="10.6" r="1.3" fill="#6a6a6a"/><circle cx="6.2" cy="1.8" r="1.3" fill="#6a6a6a"/><circle cx="6.2" cy="6.2" r="1.3" fill="#6a6a6a"/><circle cx="6.2" cy="10.6" r="1.3" fill="#6a6a6a"/></svg>
<div class="t" style="top:770.67px;font-size:18.1px;line-height:18.1px;font-weight:400;color:#444;left:323.50px;">Open Address Stations</div>
<div class="t" style="top:770.67px;font-size:18.1px;line-height:18.1px;font-weight:400;color:#444;left:588.77px;">125</div>
<div class="t" style="top:770.67px;font-size:18.1px;line-height:18.1px;font-weight:400;color:#444;left:665.91px;">48</div>
<div class="t" style="top:770.67px;font-size:18.1px;line-height:18.1px;font-weight:400;color:#444;left:720.66px;">6,000</div>
<svg class="r" style="left:785.5px;top:774px;" width="9" height="14" viewBox="0 0 9 14"><path d="M1.5 1.5l5.5 5.5-5.5 5.5" fill="none" stroke="#4a4a4a" stroke-width="1.6" stroke-linecap="round" stroke-linejoin="round"/></svg>
<div class="r" style="left:285px;top:810px;width:529px;height:41px;background:#fff;border:1.5px solid #e2e2e2;border-radius:7px"></div>
<svg class="r" style="left:300px;top:824.5px;" width="8" height="13" viewBox="0 0 8 13"><circle cx="1.8" cy="1.8" r="1.3" fill="#6a6a6a"/><circle cx="1.8" cy="6.2" r="1.3" fill="#6a6a6a"/><circle cx="1.8" cy="10.6" r="1.3" fill="#6a6a6a"/><circle cx="6.2" cy="1.8" r="1.3" fill="#6a6a6a"/><circle cx="6.2" cy="6.2" r="1.3" fill="#6a6a6a"/><circle cx="6.2" cy="10.6" r="1.3" fill="#6a6a6a"/></svg>
<div class="t" style="top:822.67px;font-size:18.1px;line-height:18.1px;font-weight:400;color:#444;left:323.50px;">Lunch Room</div>
<div class="t" style="top:822.67px;font-size:18.1px;line-height:18.1px;font-weight:400;color:#444;left:608.95px;">1</div>
<div class="t" style="top:822.67px;font-size:18.1px;line-height:18.1px;font-weight:400;color:#444;left:655.77px;">700</div>
<div class="t" style="top:822.67px;font-size:18.1px;line-height:18.1px;font-weight:400;color:#444;left:735.77px;">700</div>
<svg class="r" style="left:785.5px;top:826px;" width="9" height="14" viewBox="0 0 9 14"><path d="M1.5 1.5l5.5 5.5-5.5 5.5" fill="none" stroke="#4a4a4a" stroke-width="1.6" stroke-linecap="round" stroke-linejoin="round"/></svg>
<div class="r" style="left:285px;top:862px;width:529px;height:41px;background:#fff;border:1.5px solid #e2e2e2;border-radius:7px"></div>
<svg class="r" style="left:300px;top:876.5px;" width="8" height="13" viewBox="0 0 8 13"><circle cx="1.8" cy="1.8" r="1.3" fill="#6a6a6a"/><circle cx="1.8" cy="6.2" r="1.3" fill="#6a6a6a"/><circle cx="1.8" cy="10.6" r="1.3" fill="#6a6a6a"/><circle cx="6.2" cy="1.8" r="1.3" fill="#6a6a6a"/><circle cx="6.2" cy="6.2" r="1.3" fill="#6a6a6a"/><circle cx="6.2" cy="10.6" r="1.3" fill="#6a6a6a"/></svg>
<div class="t" style="top:874.67px;font-size:18.1px;line-height:18.1px;font-weight:400;color:#444;left:323.50px;">Mail Room</div>
<div class="t" style="top:874.67px;font-size:18.1px;line-height:18.1px;font-weight:400;color:#444;left:608.95px;">1</div>
<div class="t" style="top:874.67px;font-size:18.1px;line-height:18.1px;font-weight:400;color:#444;left:655.77px;">400</div>
<div class="t" style="top:874.67px;font-size:18.1px;line-height:18.1px;font-weight:400;color:#444;left:735.77px;">400</div>
<svg class="r" style="left:785.5px;top:878px;" width="9" height="14" viewBox="0 0 9 14"><path d="M1.5 1.5l5.5 5.5-5.5 5.5" fill="none" stroke="#4a4a4a" stroke-width="1.6" stroke-linecap="round" stroke-linejoin="round"/></svg>
<div class="r" style="left:285px;top:914px;width:529px;height:41px;background:#fff;border:1.5px solid #e2e2e2;border-radius:7px"></div>
<svg class="r" style="left:300px;top:928.5px;" width="8" height="13" viewBox="0 0 8 13"><circle cx="1.8" cy="1.8" r="1.3" fill="#6a6a6a"/><circle cx="1.8" cy="6.2" r="1.3" fill="#6a6a6a"/><circle cx="1.8" cy="10.6" r="1.3" fill="#6a6a6a"/><circle cx="6.2" cy="1.8" r="1.3" fill="#6a6a6a"/><circle cx="6.2" cy="6.2" r="1.3" fill="#6a6a6a"/><circle cx="6.2" cy="10.6" r="1.3" fill="#6a6a6a"/></svg>
<div class="t" style="top:926.67px;font-size:18.1px;line-height:18.1px;font-weight:400;color:#444;left:323.50px;">Storage Room</div>
<div class="t" style="top:926.67px;font-size:18.1px;line-height:18.1px;font-weight:400;color:#444;left:608.95px;">1</div>
<div class="t" style="top:926.67px;font-size:18.1px;line-height:18.1px;font-weight:400;color:#444;left:655.77px;">250</div>
<div class="t" style="top:926.67px;font-size:18.1px;line-height:18.1px;font-weight:400;color:#444;left:735.77px;">250</div>
<svg class="r" style="left:785.5px;top:930px;" width="9" height="14" viewBox="0 0 9 14"><path d="M1.5 1.5l5.5 5.5-5.5 5.5" fill="none" stroke="#4a4a4a" stroke-width="1.6" stroke-linecap="round" stroke-linejoin="round"/></svg>
<div class="r" style="left:285px;top:966px;width:529px;height:41px;background:#fff;border:1.5px solid #e2e2e2;border-radius:7px"></div>
<svg class="r" style="left:300px;top:980.5px;" width="8" height="13" viewBox="0 0 8 13"><circle cx="1.8" cy="1.8" r="1.3" fill="#6a6a6a"/><circle cx="1.8" cy="6.2" r="1.3" fill="#6a6a6a"/><circle cx="1.8" cy="10.6" r="1.3" fill="#6a6a6a"/><circle cx="6.2" cy="1.8" r="1.3" fill="#6a6a6a"/><circle cx="6.2" cy="6.2" r="1.3" fill="#6a6a6a"/><circle cx="6.2" cy="10.6" r="1.3" fill="#6a6a6a"/></svg>
<div class="t" style="top:978.67px;font-size:18.1px;line-height:18.1px;font-weight:400;color:#444;left:323.50px;">Filing Room</div>
<div class="t" style="top:978.67px;font-size:18.1px;line-height:18.1px;font-weight:400;color:#444;left:608.95px;">1</div>
<div class="t" style="top:978.67px;font-size:18.1px;line-height:18.1px;font-weight:400;color:#444;left:655.77px;">200</div>
<div class="t" style="top:978.67px;font-size:18.1px;line-height:18.1px;font-weight:400;color:#444;left:735.77px;">200</div>
<svg class="r" style="left:785.5px;top:982px;" width="9" height="14" viewBox="0 0 9 14"><path d="M1.5 1.5l5.5 5.5-5.5 5.5" fill="none" stroke="#4a4a4a" stroke-width="1.6" stroke-linecap="round" stroke-linejoin="round"/></svg>
<div class="r" style="left:285px;top:1018px;width:529px;height:41px;background:#fff;border:1.5px solid #e2e2e2;border-radius:7px"></div>
<svg class="r" style="left:300px;top:1032.5px;" width="8" height="13" viewBox="0 0 8 13"><circle cx="1.8" cy="1.8" r="1.3" fill="#6a6a6a"/><circle cx="1.8" cy="6.2" r="1.3" fill="#6a6a6a"/><circle cx="1.8" cy="10.6" r="1.3" fill="#6a6a6a"/><circle cx="6.2" cy="1.8" r="1.3" fill="#6a6a6a"/><circle cx="6.2" cy="6.2" r="1.3" fill="#6a6a6a"/><circle cx="6.2" cy="10.6" r="1.3" fill="#6a6a6a"/></svg>
<div class="t" style="top:1030.67px;font-size:18.1px;line-height:18.1px;font-weight:400;color:#444;left:323.50px;">Server / Computer Room</div>
<div class="t" style="top:1030.67px;font-size:18.1px;line-height:18.1px;font-weight:400;color:#444;left:608.95px;">1</div>
<div class="t" style="top:1030.67px;font-size:18.1px;line-height:18.1px;font-weight:400;color:#444;left:655.77px;">200</div>
<div class="t" style="top:1030.67px;font-size:18.1px;line-height:18.1px;font-weight:400;color:#444;left:735.77px;">200</div>
<svg class="r" style="left:785.5px;top:1034px;" width="9" height="14" viewBox="0 0 9 14"><path d="M1.5 1.5l5.5 5.5-5.5 5.5" fill="none" stroke="#4a4a4a" stroke-width="1.6" stroke-linecap="round" stroke-linejoin="round"/></svg>
<div class="r" style="left:285px;top:1070px;width:529px;height:41px;background:#fff;border:1.5px solid #e2e2e2;border-radius:7px"></div>
<svg class="r" style="left:300px;top:1084.5px;" width="8" height="13" viewBox="0 0 8 13"><circle cx="1.8" cy="1.8" r="1.3" fill="#6a6a6a"/><circle cx="1.8" cy="6.2" r="1.3" fill="#6a6a6a"/><circle cx="1.8" cy="10.6" r="1.3" fill="#6a6a6a"/><circle cx="6.2" cy="1.8" r="1.3" fill="#6a6a6a"/><circle cx="6.2" cy="6.2" r="1.3" fill="#6a6a6a"/><circle cx="6.2" cy="10.6" r="1.3" fill="#6a6a6a"/></svg>
<div class="t" style="top:1082.67px;font-size:18.1px;line-height:18.1px;font-weight:400;color:#444;left:323.50px;">Open Collaboration Area</div>
<div class="t" style="top:1082.67px;font-size:18.1px;line-height:18.1px;font-weight:400;color:#444;left:608.95px;">1</div>
<div class="t" style="top:1082.67px;font-size:18.1px;line-height:18.1px;font-weight:400;color:#444;left:665.91px;">80</div>
<div class="t" style="top:1082.67px;font-size:18.1px;line-height:18.1px;font-weight:400;color:#444;left:745.91px;">80</div>
<svg class="r" style="left:785.5px;top:1086px;" width="9" height="14" viewBox="0 0 9 14"><path d="M1.5 1.5l5.5 5.5-5.5 5.5" fill="none" stroke="#4a4a4a" stroke-width="1.6" stroke-linecap="round" stroke-linejoin="round"/></svg>
<div class="r" style="left:285px;top:1122px;width:529px;height:41px;background:#fff;border:1.5px solid #e2e2e2;border-radius:7px"></div>
<svg class="r" style="left:300px;top:1136.5px;" width="8" height="13" viewBox="0 0 8 13"><circle cx="1.8" cy="1.8" r="1.3" fill="#6a6a6a"/><circle cx="1.8" cy="6.2" r="1.3" fill="#6a6a6a"/><circle cx="1.8" cy="10.6" r="1.3" fill="#6a6a6a"/><circle cx="6.2" cy="1.8" r="1.3" fill="#6a6a6a"/><circle cx="6.2" cy="6.2" r="1.3" fill="#6a6a6a"/><circle cx="6.2" cy="10.6" r="1.3" fill="#6a6a6a"/></svg>
<div class="t" style="top:1134.67px;font-size:18.1px;line-height:18.1px;font-weight:400;color:#444;left:323.50px;">Wellness Room</div>
<div class="t" style="top:1134.67px;font-size:18.1px;line-height:18.1px;font-weight:400;color:#444;left:608.95px;">1</div>
<div class="t" style="top:1134.67px;font-size:18.1px;line-height:18.1px;font-weight:400;color:#444;left:665.91px;">64</div>
<div class="t" style="top:1134.67px;font-size:18.1px;line-height:18.1px;font-weight:400;color:#444;left:745.91px;">64</div>
<svg class="r" style="left:785.5px;top:1138px;" width="9" height="14" viewBox="0 0 9 14"><path d="M1.5 1.5l5.5 5.5-5.5 5.5" fill="none" stroke="#4a4a4a" stroke-width="1.6" stroke-linecap="round" stroke-linejoin="round"/></svg>
<div class="r" style="left:285px;top:1174px;width:529px;height:41px;background:#fff;border:1.5px solid #e2e2e2;border-radius:7px"></div>
<svg class="r" style="left:300px;top:1188.5px;" width="8" height="13" viewBox="0 0 8 13"><circle cx="1.8" cy="1.8" r="1.3" fill="#6a6a6a"/><circle cx="1.8" cy="6.2" r="1.3" fill="#6a6a6a"/><circle cx="1.8" cy="10.6" r="1.3" fill="#6a6a6a"/><circle cx="6.2" cy="1.8" r="1.3" fill="#6a6a6a"/><circle cx="6.2" cy="6.2" r="1.3" fill="#6a6a6a"/><circle cx="6.2" cy="10.6" r="1.3" fill="#6a6a6a"/></svg>
<div class="t" style="top:1186.67px;font-size:18.1px;line-height:18.1px;font-weight:400;color:#444;left:323.50px;">Phone Room</div>
<div class="t" style="top:1186.67px;font-size:18.1px;line-height:18.1px;font-weight:400;color:#444;left:608.95px;">2</div>
<div class="t" style="top:1186.67px;font-size:18.1px;line-height:18.1px;font-weight:400;color:#444;left:665.91px;">36</div>
<div class="t" style="top:1186.67px;font-size:18.1px;line-height:18.1px;font-weight:400;color:#444;left:745.91px;">72</div>
<svg class="r" style="left:785.5px;top:1190px;" width="9" height="14" viewBox="0 0 9 14"><path d="M1.5 1.5l5.5 5.5-5.5 5.5" fill="none" stroke="#4a4a4a" stroke-width="1.6" stroke-linecap="round" stroke-linejoin="round"/></svg>
<div class="r" style="left:820px;top:342px;width:6px;height:876px;background:#f3f3f3;border-radius:3px"></div>
<div class="r" style="left:820px;top:341px;width:6px;height:830px;background:#cecece;border-radius:3px"></div>
<div class="t" style="top:1246.84px;font-size:18.5px;line-height:18.5px;font-weight:400;color:#444;letter-spacing:-0.440px;left:330.30px;">Total usable SF</div>
<div class="t" style="top:1245.44px;font-size:20.5px;line-height:20.5px;font-weight:700;color:#333;letter-spacing:-0.346px;left:718.00px;">14,574</div>
<div class="t" style="top:1285.84px;font-size:18.5px;line-height:18.5px;font-weight:400;color:#444;letter-spacing:-0.012px;left:330.30px;">SpaceLogik circulation factor</div>
<div class="t" style="top:1284.44px;font-size:20.5px;line-height:20.5px;font-weight:700;color:#333;letter-spacing:0.037px;left:727.50px;">5,636</div>
<div class="t" style="top:1324.84px;font-size:18.5px;line-height:18.5px;font-weight:400;color:#444;letter-spacing:-0.099px;left:330.30px;">Building efficiency ratio (ER)</div>
<div class="t" style="top:1323.44px;font-size:20.5px;line-height:20.5px;font-weight:700;color:#333;letter-spacing:0.082px;left:744.60px;">788</div>
<div class="t" style="top:1363.84px;font-size:18.5px;line-height:18.5px;font-weight:400;color:#444;letter-spacing:-0.317px;left:330.30px;">Total required RSF</div>
<div class="t" style="top:1362.44px;font-size:20.5px;line-height:20.5px;font-weight:700;color:#333;letter-spacing:0.094px;left:715.80px;">25,263</div>
<div class="t" style="top:240.10px;font-size:23.5px;line-height:23.5px;font-weight:700;color:#f2923b;letter-spacing:-0.129px;left:890.50px;">Room Options</div>
<div class="t" style="top:302.84px;font-size:18.5px;line-height:18.5px;font-weight:400;color:#444;letter-spacing:-0.292px;left:890.00px;">Room name</div>
<div class="r" style="left:890px;top:334px;width:540px;height:46px;border:1.5px solid #e2e2e2;border-radius:5.5px;background:#fff"></div>
<div class="t" style="top:349.84px;font-size:18.5px;line-height:18.5px;font-weight:400;color:#222;letter-spacing:-0.254px;left:904.50px;">Large Conference Area</div>
<div class="t" style="top:407.14px;font-size:18.5px;line-height:18.5px;font-weight:400;color:#444;letter-spacing:-0.301px;left:890.00px;">Category</div>
<div class="r" style="left:890px;top:438px;width:172px;height:43px;border:2px solid #78b6f4;border-radius:5.5px;background:#e8f0fa"></div>
<div class="r" style="left:912px;top:449px;width:21px;height:21px;border:2px solid #3e99ef;border-radius:50%;background:#fff"></div>
<div class="r" style="left:916px;top:453px;width:13px;height:13px;border-radius:50%;background:#3e99ef"></div>
<div class="t" style="top:451.96px;font-size:18px;line-height:18px;font-weight:700;color:#3e99ef;letter-spacing:-0.332px;left:943.90px;">Guest</div>
<div class="r" style="left:1073px;top:438px;width:173px;height:43px;border:1.5px solid #e2e2e2;border-radius:5.5px;background:#fff"></div>
<div class="r" style="left:1095px;top:449px;width:22px;height:22px;border:1.5px solid #555;border-radius:50%;background:#fff"></div>
<div class="t" style="top:451.54px;font-size:18.5px;line-height:18.5px;font-weight:400;color:#444;letter-spacing:-0.533px;left:1128.30px;">Employee</div>
<div class="r" style="left:1258px;top:438px;width:172px;height:43px;border:1.5px solid #e2e2e2;border-radius:5.5px;background:#fff"></div>
<div class="r" style="left:1279px;top:449px;width:22px;height:22px;border:1.5px solid #555;border-radius:50%;background:#fff"></div>
<div class="t" style="top:451.54px;font-size:18.5px;line-height:18.5px;font-weight:400;color:#444;letter-spacing:0.160px;left:1311.00px;">Support</div>
<div class="t" style="top:509.14px;font-size:18.5px;line-height:18.5px;font-weight:400;color:#444;letter-spacing:-0.676px;left:889.90px;">Area</div>
<div class="r" style="left:890px;top:539px;width:540px;height:48px;border:1.5px solid #e2e2e2;border-radius:5.5px;background:#fff"></div>
<div class="t" style="top:556.64px;font-size:18.5px;line-height:18.5px;font-weight:400;color:#444;letter-spacing:-0.038px;left:908.00px;">Conference Room</div>
<svg class="r" style="left:1396px;top:557px;" width="17" height="11" viewBox="0 0 17 11"><path d="M1.5 1.5l7 7 7-7" fill="none" stroke="#bbb" stroke-width="1.8" stroke-linecap="round" stroke-linejoin="round"/></svg>
<div class="t" style="top:614.34px;font-size:18.5px;line-height:18.5px;font-weight:400;color:#444;letter-spacing:-1.294px;left:889.90px;">Size</div>
<div class="r" style="left:890px;top:644px;width:540px;height:48px;border:1.5px solid #e2e2e2;border-radius:5.5px;background:#fff"></div>
<div class="t" style="top:661.64px;font-size:18.5px;line-height:18.5px;font-weight:400;color:#444;letter-spacing:-0.219px;left:908.80px;">15*25</div>
<svg class="r" style="left:1396px;top:662px;" width="17" height="11" viewBox="0 0 17 11"><path d="M1.5 1.5l7 7 7-7" fill="none" stroke="#bbb" stroke-width="1.8" stroke-linecap="round" stroke-linejoin="round"/></svg>
<div class="t" style="top:718.94px;font-size:18.5px;line-height:18.5px;font-weight:400;color:#444;letter-spacing:0.155px;left:890.00px;">Quantity</div>
<div class="r" style="left:890px;top:750px;width:540px;height:46px;border:1.5px solid #e2e2e2;border-radius:5.5px;background:#fff"></div>
<div class="r" style="left:907px;top:772px;width:18px;height:2px;background:#cfcfcf"></div>
<div class="t" style="top:765.76px;font-size:18px;line-height:18px;font-weight:400;color:#222;left:1139.5px;width:40px;text-align:center;">1</div>
<svg class="r" style="left:1394px;top:763px;" width="20" height="20" viewBox="0 0 20 20"><path d="M10 1v18M1 10h18" stroke="#444" stroke-width="2"/></svg>
<div class="r" style="left:890px;top:828px;width:138px;height:42px;border:1.6px solid #555;border-radius:8px;background:#fff"></div>
<svg class="r" style="left:902px;top:841px;" width="15" height="17" viewBox="0 0 15 17"><path d="M1 3.5h13M5 3.5V1.5h5v2M2.8 3.5l.9 12.3h7.6l.9-12.3" fill="none" stroke="#666" stroke-width="1.5" stroke-linejoin="round"/></svg>
<div class="t" style="top:841.03px;font-size:16.5px;line-height:16.5px;font-weight:400;color:#666;letter-spacing:-0.324px;left:928.40px;">Delete room</div>
<div class="r" style="left:1038px;top:828px;width:67px;height:42px;background:#3e99ef;border-radius:7px"></div>
<div class="t" style="top:841.45px;font-size:16px;line-height:16px;font-weight:400;color:#fff;letter-spacing:-1.560px;left:1055.60px;">Save</div>
<div class="t" style="top:240.10px;font-size:23.5px;line-height:23.5px;font-weight:700;color:#f2923b;letter-spacing:-0.124px;left:1495.20px;">Room Details</div>
<svg class="r" style="left:1660.5px;top:241.5px;" width="12" height="16" viewBox="0 0 12 16"><path d="M2.5 2l6 6-6 6" fill="none" stroke="#444" stroke-width="2" stroke-linecap="round" stroke-linejoin="round"/></svg>
<div class="t" style="top:240.10px;font-size:23.5px;line-height:23.5px;font-weight:700;color:#555;letter-spacing:-0.156px;left:1687.70px;">Large Conference Area</div>
<div class="t" style="top:301.37px;font-size:20px;line-height:20px;font-weight:400;color:#f2923b;letter-spacing:0.136px;left:1505.00px;">Construction</div>
<div class="t" style="top:301.37px;font-size:20px;line-height:20px;font-weight:400;color:#555;letter-spacing:-0.031px;left:1663.00px;">Specifications</div>
<div class="t" style="top:301.37px;font-size:20px;line-height:20px;font-weight:400;color:#555;letter-spacing:-0.800px;left:1829.90px;">Space Plan</div>
<div class="r" style="left:1494px;top:341px;width:1024px;height:2px;background:#e8e8e8"></div>
<div class="r" style="left:1494px;top:338.5px;width:136px;height:3.5px;background:#f2923b;border-radius:2px"></div>
<div class="t" style="top:380.30px;font-size:21.5px;line-height:21.5px;font-weight:400;color:#333;letter-spacing:0.028px;left:1494.50px;-webkit-text-stroke:0.3px #333;">Construction Level</div>
<div class="r" style="left:2442px;top:374px;width:66px;height:42px;border:2px solid #8a8a8a;border-radius:7px;background:#fff"></div>
<div class="t" style="top:388.93px;font-size:15.2px;line-height:15.2px;font-weight:400;color:#3a3a3a;letter-spacing:-0.552px;left:2458.00px;">Save</div>
<div class="t" style="top:439.65px;font-size:16px;line-height:16px;font-weight:400;color:#777;letter-spacing:-0.349px;left:1505.00px;">Economic</div>
<div class="t" style="top:439.65px;font-size:16px;line-height:16px;font-weight:400;color:#777;letter-spacing:-0.767px;left:2468.00px;">Best</div>
<div class="r" style="left:1594px;top:443.5px;width:855px;height:8.0px;background:#b6d8fa;border-radius:4px"></div>
<div class="r" style="left:1594px;top:443.5px;width:568px;height:8.0px;background:#3e99ef;border-radius:4px"></div>
<div class="r" style="left:1876px;top:446.5px;width:2px;height:2.0px;background:#fff;border-radius:50%"></div>
<div class="r" style="left:2446px;top:446.5px;width:2px;height:2.0px;background:#3e99ef;border-radius:50%"></div>
<div class="r" style="left:2151.5px;top:437px;width:21.0px;height:21px;background:#3e99ef;border-radius:50%;box-shadow:0 1px 3px rgba(0,0,0,0.25)"></div>
<div class="r" style="left:1505px;top:478.0px;width:149px;height:75.5px;background:#f6f6f6;border-radius:8px"></div>
<div class="t" style="top:493.76px;font-size:18px;line-height:18px;font-weight:400;color:#444;left:1509.5px;width:140px;text-align:center;">4</div>
<div class="t" style="top:523.54px;font-size:18.5px;line-height:18.5px;font-weight:700;color:#333;letter-spacing:-0.020px;left:1549.00px;">Duplex</div>
<div class="r" style="left:1665px;top:478.0px;width:149px;height:75.5px;background:#f6f6f6;border-radius:8px"></div>
<div class="t" style="top:493.76px;font-size:18px;line-height:18px;font-weight:400;color:#444;left:1669.5px;width:140px;text-align:center;">0</div>
<div class="t" style="top:523.54px;font-size:18.5px;line-height:18.5px;font-weight:700;color:#333;letter-spacing:-0.289px;left:1716.30px;">Quad</div>
<div class="r" style="left:1825px;top:478.0px;width:149px;height:75.5px;background:#f6f6f6;border-radius:8px"></div>
<div class="t" style="top:493.76px;font-size:18px;line-height:18px;font-weight:400;color:#444;left:1829.5px;width:140px;text-align:center;">0</div>
<div class="t" style="top:523.54px;font-size:18.5px;line-height:18.5px;font-weight:700;color:#333;letter-spacing:-0.104px;left:1855.80px;">Dedicated</div>
<div class="r" style="left:1985px;top:478.0px;width:149px;height:75.5px;background:#f6f6f6;border-radius:8px"></div>
<div class="t" style="top:493.76px;font-size:18px;line-height:18px;font-weight:400;color:#444;left:1989.5px;width:140px;text-align:center;">0</div>
<div class="t" style="top:523.54px;font-size:18.5px;line-height:18.5px;font-weight:700;color:#333;letter-spacing:-1.401px;left:2046.00px;">GFI</div>
<div class="r" style="left:2145px;top:478.0px;width:149px;height:75.5px;background:#f6f6f6;border-radius:8px"></div>
<div class="t" style="top:493.76px;font-size:18px;line-height:18px;font-weight:400;color:#444;left:2149.5px;width:140px;text-align:center;">2</div>
<div class="t" style="top:523.54px;font-size:18.5px;line-height:18.5px;font-weight:700;color:#333;letter-spacing:-0.013px;left:2200.00px;">Data</div>
<div class="r" style="left:2305px;top:478.0px;width:149px;height:75.5px;background:#f6f6f6;border-radius:8px"></div>
<div class="t" style="top:493.76px;font-size:18px;line-height:18px;font-weight:400;color:#444;left:2309.5px;width:140px;text-align:center;">1</div>
<div class="t" style="top:523.54px;font-size:18.5px;line-height:18.5px;font-weight:700;color:#333;letter-spacing:-0.341px;left:2354.40px;">Doors</div>
<div class="r" style="left:1505px;top:565.5px;width:149px;height:75.5px;background:#f6f6f6;border-radius:8px"></div>
<div class="t" style="top:581.26px;font-size:18px;line-height:18px;font-weight:400;color:#444;left:1509.5px;width:140px;text-align:center;">1</div>
<div class="t" style="top:611.04px;font-size:18.5px;line-height:18.5px;font-weight:700;color:#333;letter-spacing:-0.960px;left:1559.90px;">Core</div>
<div class="r" style="left:1665px;top:565.5px;width:149px;height:75.5px;background:#f6f6f6;border-radius:8px"></div>
<div class="t" style="top:581.26px;font-size:18px;line-height:18px;font-weight:400;color:#444;left:1669.5px;width:140px;text-align:center;">4</div>
<div class="t" style="top:611.04px;font-size:18.5px;line-height:18.5px;font-weight:700;color:#333;letter-spacing:-0.580px;left:1713.60px;">Lights</div>
<div class="r" style="left:1825px;top:565.5px;width:149px;height:75.5px;background:#f6f6f6;border-radius:8px"></div>
<div class="t" style="top:581.26px;font-size:18px;line-height:18px;font-weight:400;color:#444;left:1829.5px;width:140px;text-align:center;">1</div>
<div class="t" style="top:611.04px;font-size:18.5px;line-height:18.5px;font-weight:700;color:#333;letter-spacing:-0.600px;left:1861.70px;">Switches</div>
<div class="r" style="left:1985px;top:565.5px;width:149px;height:75.5px;background:#f6f6f6;border-radius:8px"></div>
<div class="t" style="top:581.26px;font-size:18px;line-height:18px;font-weight:400;color:#444;left:1989.5px;width:140px;text-align:center;">2</div>
<div class="t" style="top:611.04px;font-size:18.5px;line-height:18.5px;font-weight:700;color:#333;letter-spacing:-0.087px;left:2020.00px;">Sprinkler</div>
<div class="r" style="left:2145px;top:565.5px;width:149px;height:75.5px;background:#f6f6f6;border-radius:8px"></div>
<div class="t" style="top:581.26px;font-size:18px;line-height:18px;font-weight:400;color:#444;left:2149.5px;width:140px;text-align:center;">1</div>
<div class="t" style="top:611.04px;font-size:18.5px;line-height:18.5px;font-weight:700;color:#333;letter-spacing:-0.925px;left:2194.30px;">LS-HS</div>
<div class="r" style="left:2305px;top:565.5px;width:149px;height:75.5px;background:#f6f6f6;border-radius:8px"></div>
<div class="t" style="top:581.26px;font-size:18px;line-height:18px;font-weight:400;color:#444;left:2309.5px;width:140px;text-align:center;">1</div>
<div class="t" style="top:611.04px;font-size:18.5px;line-height:18.5px;font-weight:700;color:#333;letter-spacing:-0.183px;left:2331.00px;">HVAC Zone</div>
<div class="t" style="top:668.21px;font-size:18.3px;line-height:18.3px;font-weight:700;color:#333;letter-spacing:-0.322px;left:1505.00px;">Doors</div>
<div class="t" style="top:667.95px;font-size:18.6px;line-height:18.6px;font-weight:400;color:#444;letter-spacing:0.109px;left:1622.20px;">Sliding or pivot glass door (match with 3/8" glass front).</div>
<div class="t" style="top:703.81px;font-size:18.3px;line-height:18.3px;font-weight:700;color:#333;letter-spacing:-0.057px;left:1505.00px;">Flooring</div>
<div class="t" style="top:703.55px;font-size:18.6px;line-height:18.6px;font-weight:400;color:#444;letter-spacing:0.007px;left:1622.20px;">24" x 24" carpet tiles, MOA of $32 / yard.</div>
<div class="t" style="top:739.41px;font-size:18.3px;line-height:18.3px;font-weight:700;color:#333;letter-spacing:-0.218px;left:1505.00px;">Walls</div>
<div class="t" style="top:739.15px;font-size:18.6px;line-height:18.6px;font-weight:400;color:#444;letter-spacing:-0.062px;left:1622.20px;">VWC ($9/yard MOA) one wall, primer and 2 coats BM on other walls.</div>
<div class="t" style="top:775.01px;font-size:18.3px;line-height:18.3px;font-weight:700;color:#333;letter-spacing:-0.272px;left:1505.00px;">Ceiling</div>
<div class="t" style="top:774.75px;font-size:18.6px;line-height:18.6px;font-weight:400;color:#444;letter-spacing:-0.087px;left:1622.20px;">Painted drywall, 5/8" on metal studs, secured above.</div>
<div class="t" style="top:810.61px;font-size:18.3px;line-height:18.3px;font-weight:700;color:#333;letter-spacing:0.013px;left:1505.00px;">Lighting 2</div>
<div class="t" style="top:810.35px;font-size:18.6px;line-height:18.6px;font-weight:400;color:#444;letter-spacing:-0.205px;left:1622.20px;">Install (12) 3.5" LED downlights on dimmer, Focal Point FLC3D/LC3, or equal.</div>
<div class="t" style="top:846.21px;font-size:18.3px;line-height:18.3px;font-weight:700;color:#333;letter-spacing:-0.250px;left:1505.00px;">Pendant C3</div>
<div class="t" style="top:845.95px;font-size:18.6px;line-height:18.6px;font-weight:400;color:#444;letter-spacing:0.005px;left:1622.20px;">Allow $6000 for pendant or linear fixture(s) over conference table.</div>
<div class="r" style="left:1494px;top:886.5px;width:1014px;height:2.0px;background:#bdbdbd"></div>
<div class="t" style="top:915.00px;font-size:21.5px;line-height:21.5px;font-weight:400;color:#333;letter-spacing:0.197px;left:1495.00px;-webkit-text-stroke:0.3px #333;">Upgrade Options</div>
<div class="r" style="left:2442px;top:909px;width:66px;height:42px;border:2px solid #8a8a8a;border-radius:7px;background:#fff"></div>
<div class="t" style="top:923.63px;font-size:15.2px;line-height:15.2px;font-weight:400;color:#3a3a3a;letter-spacing:-0.552px;left:2458.00px;">Save</div>
<svg class="r" style="left:1505px;top:964px;" width="20" height="20" viewBox="0 0 20 20"><rect width="20" height="20" rx="3" fill="#3e99ef"/><path d="M4.5 10l4 4 7-8" fill="none" stroke="#fff" stroke-width="2" stroke-linecap="round" stroke-linejoin="round"/></svg>
<div class="t" style="top:967.14px;font-size:18.5px;line-height:18.5px;font-weight:400;color:#444;letter-spacing:0.062px;left:1537.20px;">Provide (15) lineal feet of 3/8" tempered glass, with anodized aluminum frame.</div>
<svg class="r" style="left:1505px;top:1000px;" width="20" height="20" viewBox="0 0 20 20"><rect width="20" height="20" rx="3" fill="#3e99ef"/><path d="M4.5 10l4 4 7-8" fill="none" stroke="#fff" stroke-width="2" stroke-linecap="round" stroke-linejoin="round"/></svg>
<div class="t" style="top:1002.84px;font-size:18.5px;line-height:18.5px;font-weight:400;color:#444;letter-spacing:-0.177px;left:1537.20px;">Install (3) wall washers over logo or art, Focal Point FLC22W / LC22 or equal.</div>
<div class="r" style="left:1494px;top:1042px;width:1014px;height:2px;background:#bdbdbd"></div>
<div class="t" style="top:1071.80px;font-size:21.5px;line-height:21.5px;font-weight:400;color:#333;letter-spacing:-0.004px;left:1494.00px;-webkit-text-stroke:0.3px #333;">A La Carte Options</div>
<div class="r" style="left:2442px;top:1066px;width:66px;height:41px;border:2px solid #8a8a8a;border-radius:7px;background:#fff"></div>
<div class="t" style="top:1080.43px;font-size:15.2px;line-height:15.2px;font-weight:400;color:#3a3a3a;letter-spacing:-0.552px;left:2458.00px;">Save</div>
<div class="t" style="top:1133.91px;font-size:18.3px;line-height:18.3px;font-weight:700;color:#333;letter-spacing:-0.181px;left:1505.00px;">Walls</div>
<svg class="r" style="left:2484px;top:1137.6px;" width="12" height="8" viewBox="0 0 12 8"><path d="M1.5 1.5l4.5 4.5 4.5-4.5" fill="none" stroke="#444" stroke-width="1.6" stroke-linecap="round" stroke-linejoin="round"/></svg>
<div class="t" style="top:1181.81px;font-size:18.3px;line-height:18.3px;font-weight:700;color:#333;letter-spacing:-0.172px;left:1505.00px;">Doors</div>
<svg class="r" style="left:2484px;top:1185.5px;" width="12" height="8" viewBox="0 0 12 8"><path d="M1.5 1.5l4.5 4.5 4.5-4.5" fill="none" stroke="#444" stroke-width="1.6" stroke-linecap="round" stroke-linejoin="round"/></svg>
<div class="t" style="top:1229.11px;font-size:18.3px;line-height:18.3px;font-weight:700;color:#333;letter-spacing:-0.238px;left:1505.00px;">Ceiling</div>
<svg class="r" style="left:2484px;top:1232.8px;" width="12" height="8" viewBox="0 0 12 8"><path d="M1.5 1.5l4.5 4.5 4.5-4.5" fill="none" stroke="#444" stroke-width="1.6" stroke-linecap="round" stroke-linejoin="round"/></svg>
<div class="r" style="left:1494px;top:1164px;width:1014px;height:2px;background:#e6e6e6"></div>
<div class="r" style="left:1494px;top:1211px;width:1014px;height:2px;background:#e6e6e6"></div>
<div class="r" style="left:1494px;top:1259px;width:1014px;height:2px;background:#e6e6e6"></div>
<div class="r" style="left:242px;top:96px;width:2318px;height:38px;z-index:5;pointer-events:none;background:linear-gradient(rgba(0,0,0,0.11) 0px,rgba(0,0,0,0.08) 5px,rgba(0,0,0,0.05) 13px,rgba(0,0,0,0.04) 20px,rgba(0,0,0,0.025) 23px,rgba(0,0,0,0.01) 30px,rgba(0,0,0,0) 38px)"></div>
</body></html>
